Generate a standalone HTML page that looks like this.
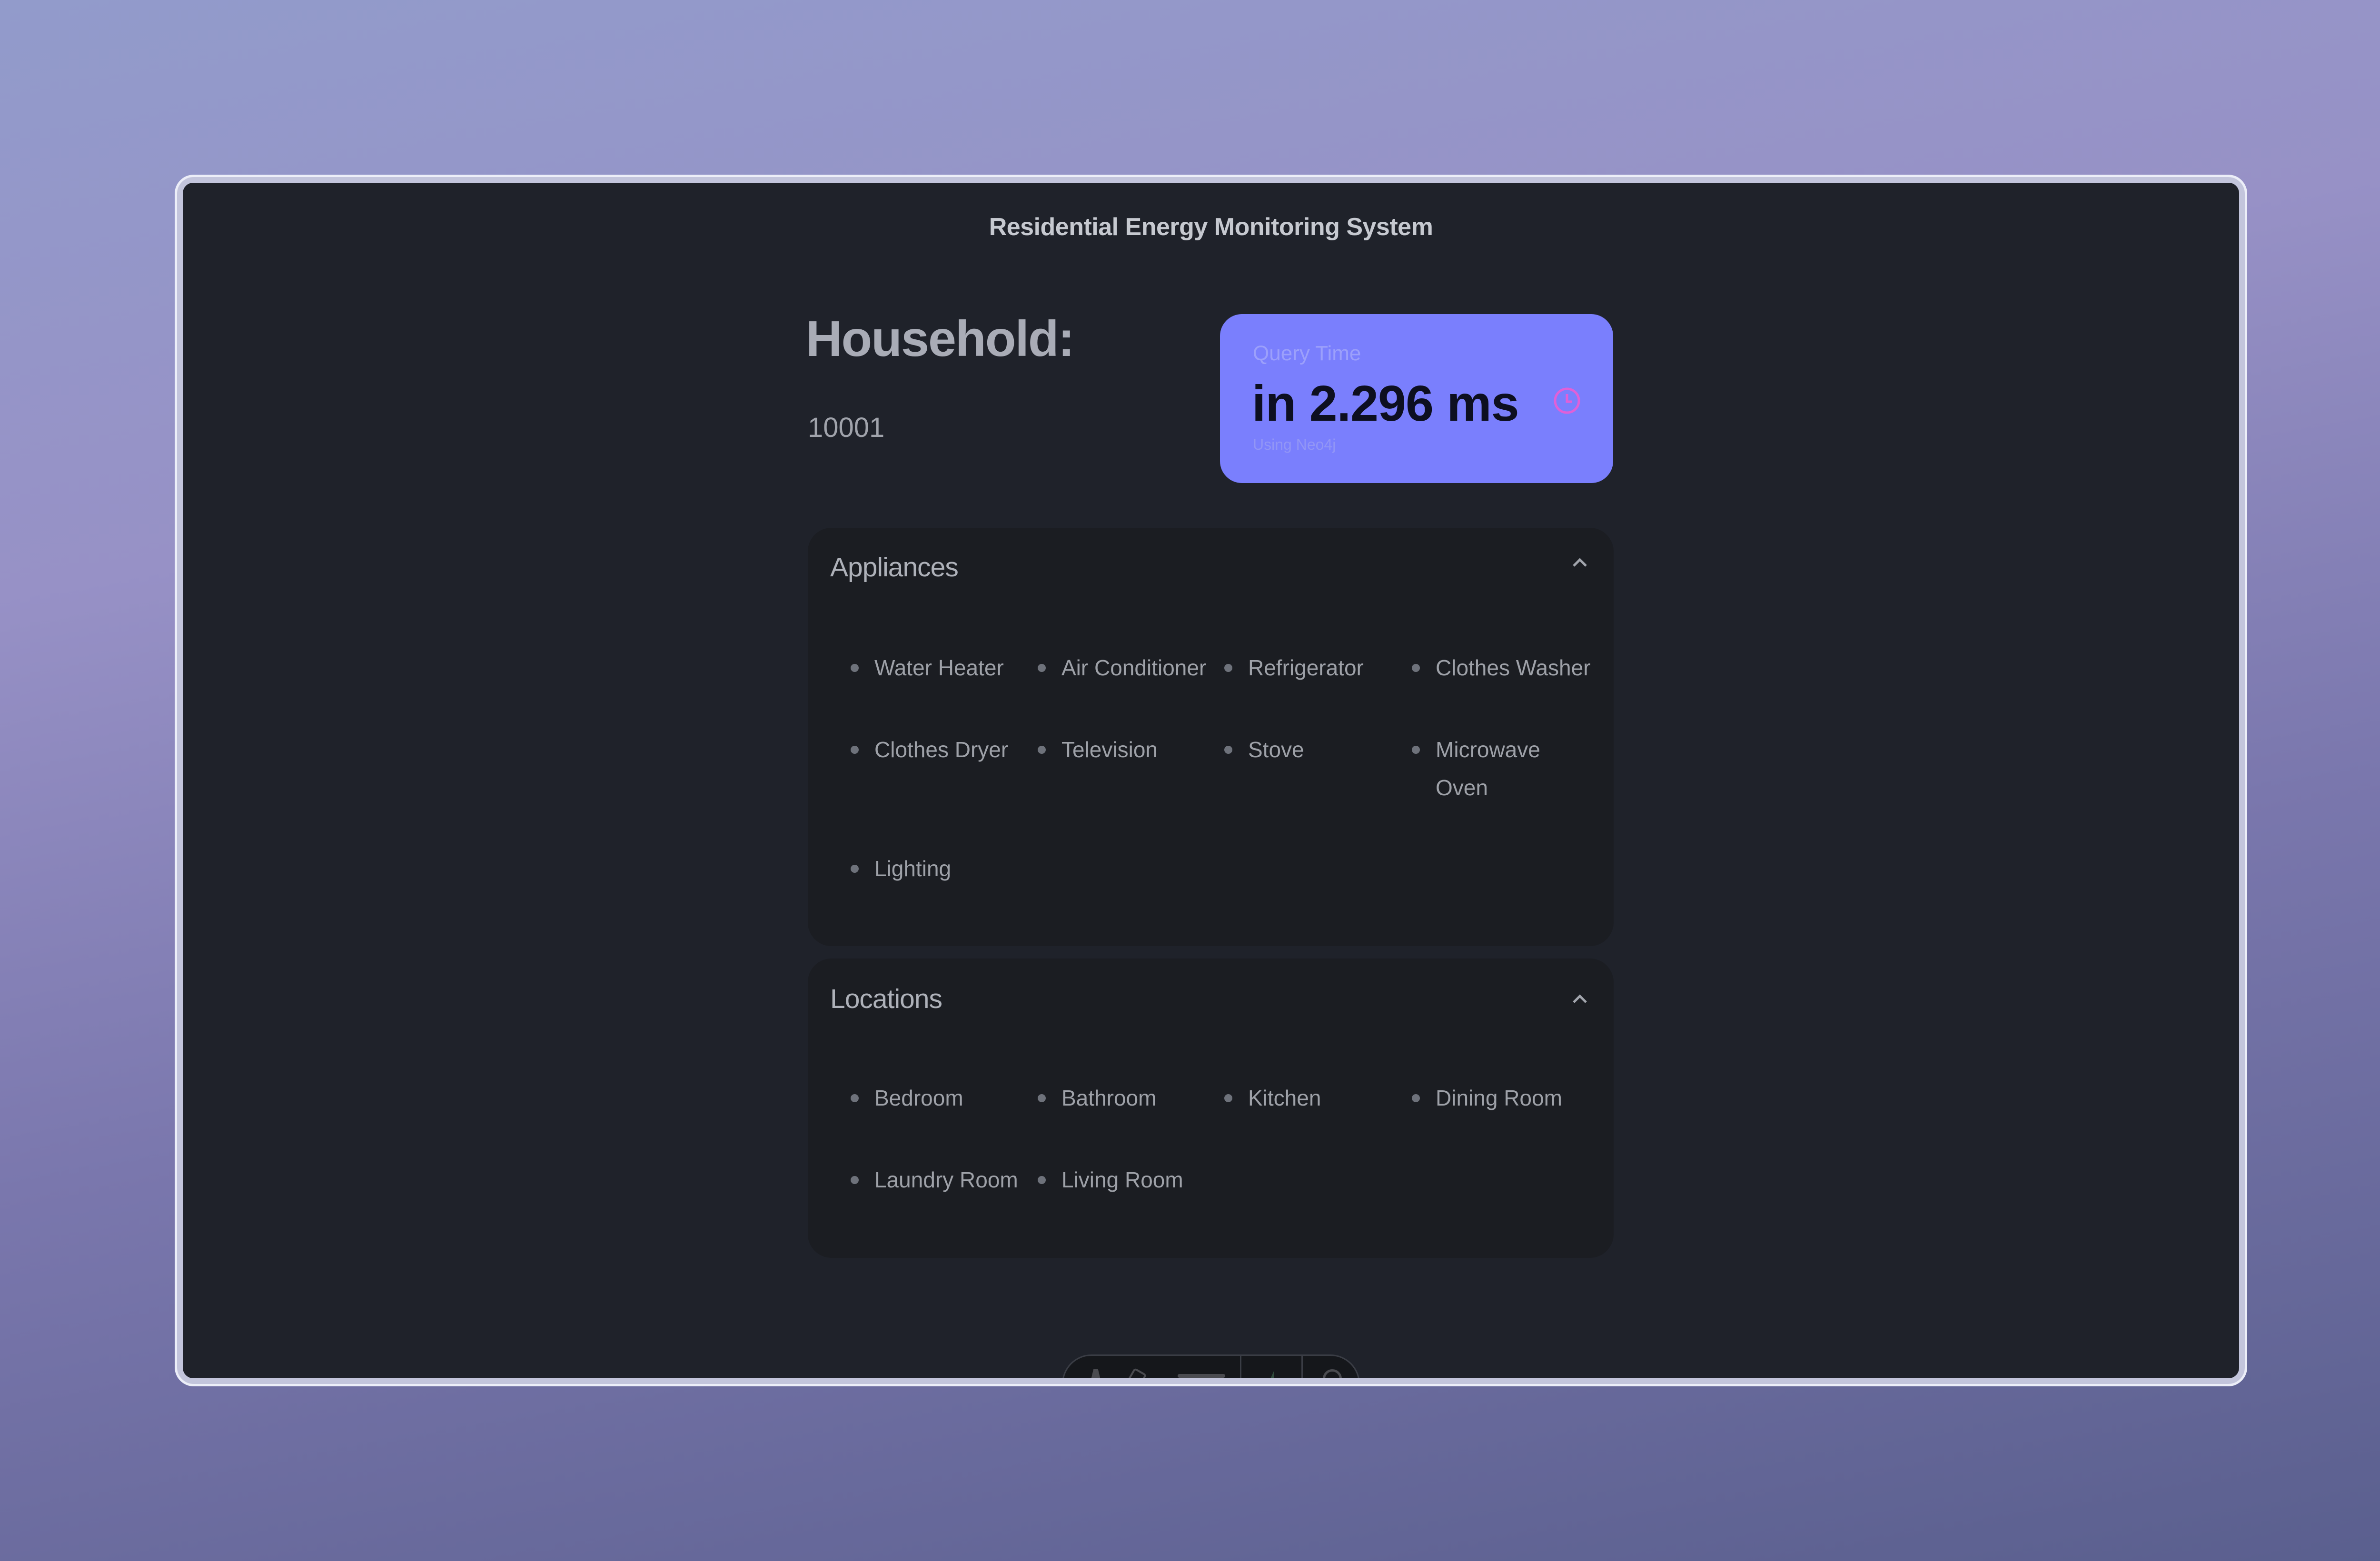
<!DOCTYPE html>
<html><head><meta charset="utf-8"><style>
*{margin:0;padding:0;box-sizing:border-box}
html,body{width:5088px;height:3280px;overflow:hidden}
body{background:linear-gradient(170deg,#929bcb 0%,#9791c6 30%,#7a77ad 60%,#5a5f8e 100%);font-family:"Liberation Sans",sans-serif;position:relative}
.frame{position:absolute;left:367px;top:367px;width:4354px;height:2546px;border-radius:40px;background:#c3c5dc;border:5px solid #eceef8}
.win{position:absolute;left:384px;top:384px;width:4320px;height:2512px;background:#1f222a;border-radius:22px;overflow:hidden}
.a{position:absolute;white-space:nowrap}
.card{position:absolute;left:1313px;width:1693px;background:#1b1d22;border-radius:50px}
.it{position:absolute;font-size:46px;color:#9ea1a8;line-height:80px}
.it:before{content:"";position:absolute;left:-50px;top:32px;width:17px;height:17px;border-radius:50%;background:#6e727b}
.hd{position:absolute;left:47px;font-size:57px;color:#aeb1b9;letter-spacing:-1px}
.chev{position:absolute;left:1605px;width:34px;height:24px}
</style></head><body>
<div class="frame"></div>
<div class="win">
  <div class="a" style="left:0;width:4320px;text-align:center;top:63px;font-size:52px;font-weight:bold;color:#c6c9d0;letter-spacing:-0.5px">Residential Energy Monitoring System</div>
  <div class="a" style="left:1309px;top:268px;font-size:106px;font-weight:bold;color:#a9acb6;letter-spacing:-2px;line-height:120px">Household:</div>
  <div class="a" style="left:1313px;top:480px;font-size:58px;color:#a0a3ab;line-height:70px">10001</div>
  <div style="position:absolute;left:2179px;top:276px;width:826px;height:355px;background:#7a7ffd;border-radius:46px">
    <div class="a" style="left:69px;top:58px;font-size:44px;color:#9ca0fb">Query Time</div>
    <div class="a" style="left:67px;top:128px;font-size:106px;font-weight:bold;color:#0d0f20;letter-spacing:-1px;line-height:120px">in 2.296 ms</div>
    <div class="a" style="left:69px;top:256px;font-size:32px;color:#9296f6">Using Neo4j</div>
    <svg style="position:absolute;left:697px;top:150px" width="64" height="64" viewBox="0 0 64 64"><circle cx="32" cy="32" r="25" fill="none" stroke="#e060d8" stroke-width="5"/><path d="M32 18V34H42" fill="none" stroke="#e060d8" stroke-width="5"/></svg>
  </div>
  <div class="card" style="top:725px;height:879px">
    <div class="hd" style="top:50px">Appliances</div>
    <svg class="chev" style="top:60px" viewBox="0 0 34 24"><path d="M4 20L17 7L30 20" fill="none" stroke="#a2a5ad" stroke-width="5"/></svg>
    <div class="it" style="left:140px;top:254px">Water Heater</div>
    <div class="it" style="left:533px;top:254px">Air Conditioner</div>
    <div class="it" style="left:925px;top:254px">Refrigerator</div>
    <div class="it" style="left:1319px;top:254px">Clothes Washer</div>
    <div class="it" style="left:140px;top:426px">Clothes Dryer</div>
    <div class="it" style="left:533px;top:426px">Television</div>
    <div class="it" style="left:925px;top:426px">Stove</div>
    <div class="it" style="left:1319px;top:426px">Microwave<br>Oven</div>
    <div class="it" style="left:140px;top:676px">Lighting</div>
  </div>
  <div class="card" style="top:1630px;height:629px">
    <div class="hd" style="top:52px">Locations</div>
    <svg class="chev" style="top:72px" viewBox="0 0 34 24"><path d="M4 20L17 7L30 20" fill="none" stroke="#a2a5ad" stroke-width="5"/></svg>
    <div class="it" style="left:140px;top:253px">Bedroom</div>
    <div class="it" style="left:533px;top:253px">Bathroom</div>
    <div class="it" style="left:925px;top:253px">Kitchen</div>
    <div class="it" style="left:1319px;top:253px">Dining Room</div>
    <div class="it" style="left:140px;top:425px">Laundry Room</div>
    <div class="it" style="left:533px;top:425px">Living Room</div>
  </div>
  <div style="position:absolute;left:1847px;top:2462px;width:626px;height:130px;background:#15171b;border:3px solid #3a3d45;border-radius:62px">
    <div style="position:absolute;left:371px;top:0;width:3px;height:130px;background:#3a3d45"></div>
    <div style="position:absolute;left:500px;top:0;width:3px;height:130px;background:#3a3d45"></div>
    <div style="position:absolute;left:56px;top:28px;width:24px;height:30px;background:#4a4b50;clip-path:polygon(30% 0,70% 0,100% 100%,0 100%)"></div>
    <div style="position:absolute;left:240px;top:38px;width:100px;height:8px;background:#4a4b50;border-radius:4px"></div>
    <div style="position:absolute;left:140px;top:30px;width:30px;height:30px;border:4px solid #4a4b50;border-radius:6px;transform:rotate(30deg)"></div>
    <div style="position:absolute;left:425px;top:30px;width:18px;height:40px;background:#2f4a3c;clip-path:polygon(100% 0,100% 100%,0 100%)"></div>
    <div style="position:absolute;left:545px;top:28px;width:40px;height:40px;border:5px solid #4a4b50;border-radius:50%"></div>
  </div>
</div>
</body></html>
